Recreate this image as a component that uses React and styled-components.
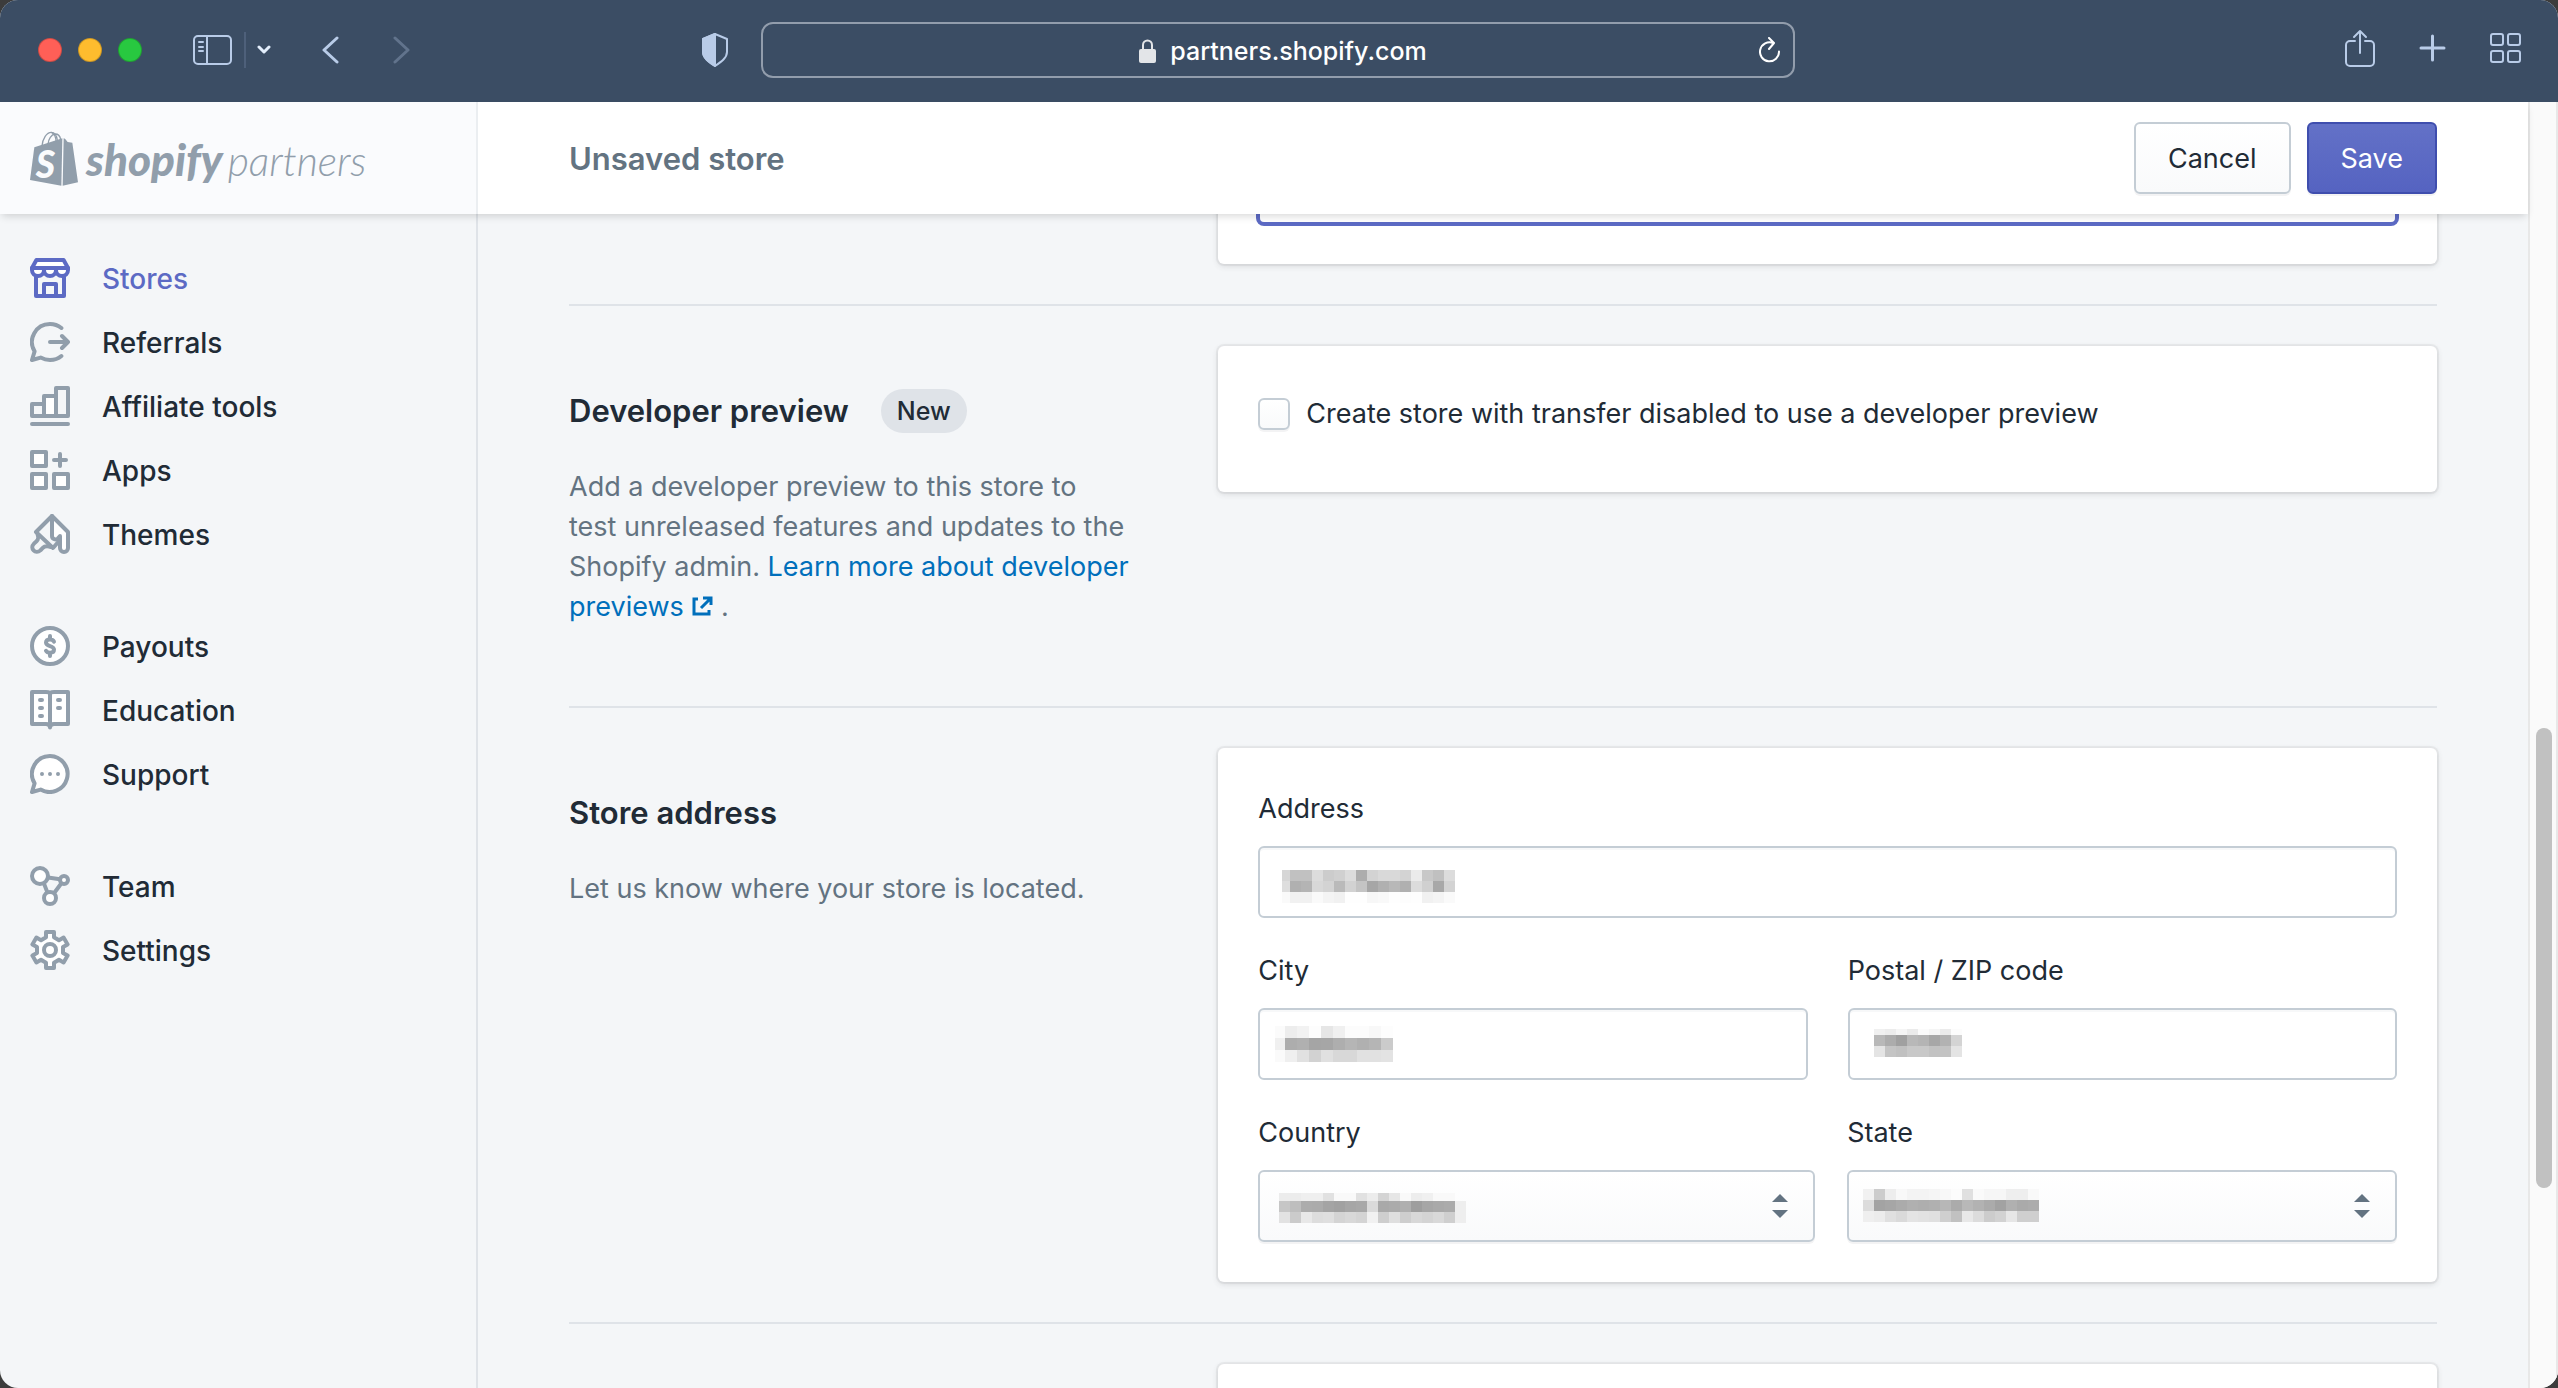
import { useState } from "react";
import styled, { createGlobalStyle } from "styled-components";

const GlobalStyle = createGlobalStyle`
  * {
    box-sizing: border-box;
  }
  body {
    margin: 0;
    background: #3c3c3c;
    color: #212b36;
    font-family: Inter, "Liberation Sans", sans-serif;
    font-size: 27px;
    line-height: 40px;
  }
  button, input, select {
    font: inherit;
    color: inherit;
  }
`;

const Window = styled.div`
  display: flex;
  flex-direction: column;
  height: 100vh;
  border-radius: 18px;
  overflow: hidden;
  background: #f4f6f8;
`;

/* browser toolbar */

const Toolbar = styled.header`
  display: grid;
  grid-template-columns: 761fr 1034fr 763fr;
  align-items: center;
  flex: none;
  height: 102px;
  padding-bottom: 2px;
  background: #3b4d64;
  color: #b9cce8;
`;

const ToolbarStart = styled.div`
  display: flex;
  align-items: center;
  padding: 0 32px 0 38px;
`;

const ToolbarEnd = styled.div`
  display: flex;
  align-items: center;
  justify-content: flex-end;
  gap: 44px;
  padding: 0 37px 4px 0;
`;

const Lights = styled.div`
  display: flex;
  gap: 16px;
  margin-right: 51px;
`;

const Light = styled.button`
  width: 24px;
  height: 24px;
  padding: 0;
  border: 1px solid rgba(0, 0, 0, 0.2);
  border-radius: 50%;
  background: ${(props) => props.$color};
`;

const ToolButton = styled.button`
  display: flex;
  padding: 0;
  border: none;
  background: none;
  color: inherit;
  opacity: ${(props) => (props.disabled ? 0.3 : 1)};
`;

const ToolDivider = styled.span`
  width: 2px;
  height: 36px;
  margin: 0 11px 0 12px;
  background: #4e607a;
`;

const History = styled.div`
  display: flex;
  gap: 54px;
  margin: 0 auto 0 51px;
`;

const AddressBar = styled.div`
  display: flex;
  align-items: center;
  height: 56px;
  padding: 0 12px 0 44px;
  border: 2px solid #929dac;
  border-radius: 12px;
  color: #fff;
  font-weight: 500;
  font-size: 25px;
`;

const Host = styled.div`
  flex: 1;
  display: flex;
  align-items: center;
  justify-content: center;
  gap: 14px;
  padding-top: 2px;
`;

/* page shell */

const Page = styled.div`
  flex: 1;
  display: flex;
  min-height: 0;
`;

const Frame = styled.div`
  flex: 1;
  display: flex;
  flex-direction: column;
  min-width: 0;
`;

const TopBar = styled.div`
  display: flex;
  flex: none;
  height: 112px;
  background: #fff;
  box-shadow: 0 4px 8px -2px rgba(0, 0, 0, 0.16);
  z-index: 1;
`;

const Brand = styled.a`
  display: flex;
  align-items: center;
  gap: 8px;
  width: 478px;
  padding-left: 30px;
  border-right: 2px solid #ebeef1;
  background: #fafbfd;
  color: #919eab;
  text-decoration: none;
  font-family: Lato, sans-serif;
  font-style: italic;
`;

const BrandText = styled.span`
  display: flex;
  align-items: baseline;
  gap: 5px;
  padding-top: 4px;
`;

const BrandName = styled.span`
  font-size: 44px;
  font-weight: 900;
`;

const BrandSuffix = styled.span`
  font-size: 41px;
  font-weight: 300;
`;

const SaveBar = styled.div`
  flex: 1;
  display: flex;
  align-items: center;
  gap: 16px;
  padding: 0 91px;
`;

const StatusText = styled.h1`
  flex: 1;
  margin: 0;
  padding-top: 2px;
  font-size: 31px;
  font-weight: 600;
  color: #637381;
`;

const Button = styled.button`
  height: 72px;
  padding: 2px 32px 0;
  border: 2px solid ${(props) => (props.$primary ? "#3f4eae" : "#c4cdd5")};
  border-radius: 6px;
  background: ${(props) =>
    props.$primary
      ? "linear-gradient(to bottom, #6371c7, #5563c1)"
      : "linear-gradient(to bottom, #fff, #f9fafb)"};
  box-shadow: 0 2px 0 rgba(22, 29, 37, 0.05);
  color: ${(props) => (props.$primary ? "#fff" : "#212b36")};
`;

const Body = styled.div`
  flex: 1;
  display: flex;
  min-height: 0;
`;

const Sidebar = styled.nav`
  flex: none;
  width: 478px;
  padding-top: 32px;
  border-right: 2px solid #dfe3e8;
`;

const NavGroup = styled.ul`
  margin: 0 0 48px;
  padding: 0;
  list-style: none;
`;

const NavLink = styled.a`
  display: flex;
  align-items: center;
  gap: 32px;
  height: 64px;
  padding-left: 30px;
  color: ${(props) => (props.$active ? "#5c6ac4" : "#212b36")};
  font-size: 28px;
  font-weight: 500;
  text-decoration: none;
  svg {
    color: ${(props) => (props.$active ? "#5c6ac4" : "#919eab")};
  }
`;

const NavLabel = styled.span`
  padding-top: 2px;
`;

const Main = styled.main`
  flex: 1;
  min-width: 0;
  padding: 0 91px;
  overflow: hidden;
`;

const Section = styled.section`
  display: grid;
  grid-template-columns: 1fr 2fr;
  gap: 40px;
  align-items: start;
  padding: 40px 0;
  border-top: 2px solid #dfe3e8;
`;

/* the part of the form that is scrolled under the top bar */
const ScrolledSection = styled(Section)`
  margin-top: -144px;
`;

const Annotation = styled.div`
  padding: 40px 40px 39px 0;
`;

const Heading = styled.h2`
  display: flex;
  align-items: center;
  gap: 32px;
  margin: 0 0 31px;
  font-size: 31px;
  line-height: 50px;
  font-weight: 600;
`;

const Badge = styled.span`
  padding: 0 16px;
  border-radius: 22px;
  background: #dfe3e8;
  font-size: 25px;
  font-weight: 500;
  line-height: 44px;
`;

const Description = styled.p`
  margin: 0;
  color: #637381;
`;

const Link = styled.a`
  color: #006fbb;
  text-decoration: none;
`;

const Card = styled.div`
  grid-column: 2;
  display: flex;
  flex-direction: column;
  gap: 32px;
  min-height: 106px;
  padding: 40px;
  border-radius: 6px;
  background: #fff;
  box-shadow: 0 0 0 2px rgba(63, 63, 68, 0.06), 0 2px 6px rgba(63, 63, 68, 0.16);
`;

const Choice = styled.label`
  display: flex;
  align-items: center;
  gap: 16px;
  padding: 8px 0 18px;
`;

const Checkbox = styled.input`
  appearance: none;
  width: 32px;
  height: 32px;
  margin: 0;
  border: 2px solid #c4cdd5;
  border-radius: 6px;
  background: linear-gradient(to bottom, #fff, #f9fafb);
  box-shadow: 0 2px 0 rgba(22, 29, 37, 0.05);
  &:checked {
    background: #5c6ac4;
  }
`;

const FieldRow = styled.div`
  display: grid;
  grid-template-columns: ${(props) => props.$columns || "1fr 1fr"};
  gap: ${(props) => props.$gap || "40px"};
`;

const FieldLabel = styled.label`
  display: block;
  margin-bottom: 16px;
  line-height: 42px;
`;

const Control = styled.div`
  position: relative;
  height: 72px;
`;

const Input = styled.input`
  display: block;
  width: 100%;
  height: 72px;
  padding: 0 24px;
  border: 2px solid #c4cdd5;
  border-radius: 6px;
  background: #fff;
  box-shadow: inset 0 2px 0 rgba(99, 115, 129, 0.05);
  outline: none;
`;

const FocusedInput = styled(Input)`
  border-color: #5c6ac4;
  box-shadow: 0 0 0 2px #5c6ac4;
`;

const Select = styled.select`
  appearance: none;
  width: 100%;
  height: 72px;
  padding: 0 60px 0 24px;
  border: 2px solid #c4cdd5;
  border-radius: 6px;
  background: linear-gradient(to bottom, #fff, #f9fafb);
  box-shadow: 0 2px 0 rgba(22, 29, 37, 0.05);
`;

const SelectArrows = styled.svg`
  position: absolute;
  top: 24px;
  right: 27px;
  color: #637381;
  pointer-events: none;
`;

const MosaicLayer = styled.svg`
  position: absolute;
  top: 0;
  left: 0;
  pointer-events: none;
`;

const Scrollbar = styled.div`
  display: grid;
  grid-template-rows: 626fr 460fr 200fr;
  flex: none;
  width: 30px;
  padding: 0 6px;
  border: solid #e8e8e8;
  border-width: 0 2px;
  background: #fafafa;
`;

const Thumb = styled.div`
  grid-row: 2;
  width: 16px;
  border-radius: 8px;
  background: #c1c1c1;
`;

/* icons */

const Icon = ({ children, size = 40 }) => (
  <svg
    width={size}
    height={size}
    viewBox="0 0 20 20"
    fill="none"
    stroke="currentColor"
    strokeWidth="2"
    strokeLinecap="round"
    strokeLinejoin="round"
    aria-hidden="true"
  >
    {children}
  </svg>
);

const icons = {
  stores: (
    <>
      <path d="M3.2 1h13.6L19 5H1z" fill="#fff" />
      <path d="M1 5v1a3 3 0 0 0 6 0a3 3 0 0 0 6 0a3 3 0 0 0 6 0V5z" fill="#fff" />
      <path d="M3 9v10h14V9M7 19v-6h6v6" />
    </>
  ),
  referrals: (
    <path d="M15.7 3C13.8 1.5 11.9 1 10 1a9 9 0 0 0-7.7 13.7L1 19l4.3-1.2C6.8 18.6 8.4 19 10 19c2.1 0 4.1-.6 5.700-2M10 10h9M16 7l3 3-3 3" />
  ),
  affiliate: (
    <>
      <path d="M7 5h6v10H7z" fill="#fff" />
      <path d="M1 9h6v6H1zM13 1h6v14h-6zM1 19h18" />
    </>
  ),
  apps: (
    <>
      <path d="M1 1h7v7H1zM1 12h7v7H1zM12 12h7v7h-7z" fill="#fff" />
      <path d="M12 5h6M15 2v6" />
    </>
  ),
  themes: (
    <>
      <path d="M11 1l8 8v8a2 2 0 0 1-4 0v-6l-1 1.2c-1 1-3 .5-3-1.2z" fill="#fff" />
      <path d="M11 1L3 9l8.5 8 3.5-4" />
      <path d="M3.8 10.2c1 2.3-.3 3.3-1.8 4.6-2.4 2.4.8 5.6 3.2 3.4 1.3-1.5 2.3-2.8 5.3-1.7" />
    </>
  ),
  payouts: (
    <>
      <circle cx="10" cy="10" r="9" fill="#fff" />
      <path d="M12 7.8c-.4-.8-1.2-1.1-2-1.1-1.2 0-2 .6-2 1.6 0 2.3 4 1.2 4 3.5 0 1-.8 1.6-2 1.6-.9 0-1.6-.3-2-1M10 5v1.5M10 13.5V15" />
    </>
  ),
  education: (
    <>
      <path d="M1 1h7c1 0 2 .4 2 1 0-.6 1-1 2-1h7v16h-7c-1 0-2 .4-2 1.8 0-1.4-1-1.8-2-1.8H1z" fill="#fff" />
      <path d="M10 2v16M5 5h1M5 9h1M5 13h1M14 5h1M14 9h1" />
    </>
  ),
  support: (
    <>
      <path d="M10 1a9 9 0 0 0-7.7 13.7L1 19l4.3-1.2A9 9 0 1 0 10 1z" fill="#fff" />
      <path d="M6 10h0M10 10h0M14 10h0" />
    </>
  ),
  team: (
    <>
      <path d="M9 5.8l6 .8M7 8.8l1.700 4.400M15.700 8.600L12 13.600" />
      <circle cx="5" cy="5" r="4" fill="#fff" />
      <circle cx="17" cy="7" r="2" fill="#fff" />
      <circle cx="10" cy="16" r="3" fill="#fff" />
    </>
  ),
  settings: (
    <>
      <path
        d="M8 3.6V1h4v2.6l2.5 1.5 2.3-1.3 2 3.4-2.3 1.3v3l2.3 1.3-2 3.4-2.3-1.3-2.5 1.5V19H8v-2.6l-2.5-1.5-2.3 1.3-2-3.4 2.3-1.3v-3L1.2 7.2l2-3.4 2.3 1.3z"
        fill="#fff"
      />
      <circle cx="10" cy="10" r="3" />
    </>
  ),
};

const ToolIcon = ({ width, height, stroke = 3, children }) => (
  <svg
    width={width}
    height={height}
    viewBox={`0 0 ${width} ${height}`}
    fill="none"
    stroke="currentColor"
    strokeWidth={stroke}
    strokeLinecap="round"
    strokeLinejoin="round"
    aria-hidden="true"
  >
    {children}
  </svg>
);

const ShopifyBag = () => (
  <svg width="48" height="55" viewBox="0 0 144 165" fill="currentColor" aria-hidden="true">
    <path d="M13 49L97 22L94 164L0 147z" />
    <path d="M101 22l4 1 8 10 14 2 17 119-46 10z" />
    <g fill="none" stroke="currentColor" strokeWidth="4">
      <path d="M36 45C38 22 50 4 64 4c10 0 16 8 18 24" />
      <path d="M54 40C55 24 64 10 76 9c8 0 14 6 16 16" />
      <path d="M64 4c10 4 14 14 14 28" />
    </g>
    <text x="17" y="140" fontSize="112" fontWeight="900" fill="#fafbfd">S</text>
  </svg>
);

const navGroups = [
  [
    { icon: "stores", label: "Stores", active: true },
    { icon: "referrals", label: "Referrals" },
    { icon: "affiliate", label: "Affiliate tools" },
    { icon: "apps", label: "Apps" },
    { icon: "themes", label: "Themes" },
  ],
  [
    { icon: "payouts", label: "Payouts" },
    { icon: "education", label: "Education" },
    { icon: "support", label: "Support" },
  ],
  [
    { icon: "team", label: "Team" },
    { icon: "settings", label: "Settings" },
  ],
];

/* redacted values: grey level of every block, row by row */
const mosaics = {
  address: {
    x: 21, y: 24, size: 11, first: 11, trim: 3,
    rows: [
      "d6 c1 c1 dc cc d0 dc ad d3 d9 d9 d3 eb c8 c0 dc",
      "de b0 b4 d8 d3 ba d2 c4 a6 b0 b8 b0 dc d0 a8 d3",
      "fa f1 f1 fa f4 f1 fe fe f7 f9 fe fd fe f1 f4 fa",
    ],
  },
  city: {
    x: 15, y: 18, size: 12, first: 12, trim: 2,
    rows: [
      "fb ed f2 fd e6 f0 fc fc f8 fd",
      "f0 ad b0 a5 a6 ae b5 b0 b5 cb",
      "fa ef e1 d2 e0 d8 d8 e1 e1 e3",
    ],
  },
  zip: {
    x: 26, y: 21, size: 11, first: 6,
    rows: [
      "f0 ec f5 eb fb f5 eb fc",
      "b8 ac a0 b8 b4 a7 b2 d4",
      "e4 c4 c0 c8 c8 c2 c3 e4",
    ],
  },
  country: {
    x: 21, y: 23, size: 11, first: 8,
    rows: [
      "ec ec ef ef e1 f9 f9 e1 ec d4 e6 f9 ed f0 f9 f9",
      "c6 be ac ab a4 a1 a6 a8 da a9 ab af 9e a6 a9 ab ee",
      "e2 cb e8 dd df d4 d8 d4 f1 ce df ce d8 d4 d9 cf ee",
    ],
  },
  state: {
    x: 16, y: 19, size: 11, first: 11,
    rows: [
      "f1 cc ed f8 f3 f3 f5 f8 fc e0 fa f6 f6 ee ee f9",
      "dc a3 a6 ab b0 ae b0 b7 ab b8 b2 ab a2 b0 aa ac",
      "ef ec e0 da e4 e2 e0 cf c1 e8 dc cc d2 e6 cf cf",
    ],
  },
};

const Mosaic = ({ name }) => {
  const { x, y, size, first, trim = 0, rows } = mosaics[name];
  return (
    <MosaicLayer width="240" height="72" shapeRendering="crispEdges" aria-hidden="true">
      {rows.map((row, r) =>
        row.split(" ").map((level, c) => (
          <rect
            key={`${r}-${c}`}
            x={c === 0 ? x + trim : x + c * size}
            y={r === 0 ? y : y + first + (r - 1) * size}
            width={c === 0 ? size - trim : size}
            height={r === 0 ? first : size}
            fill={`#${level}${level}${level}`}
          />
        ))
      )}
    </MosaicLayer>
  );
};

const TextField = ({ id, label }) => (
  <div>
    <FieldLabel htmlFor={id}>{label}</FieldLabel>
    <Control>
      <Input id={id} type="text" />
      <Mosaic name={id} />
    </Control>
  </div>
);

const SelectField = ({ id, label }) => (
  <div>
    <FieldLabel htmlFor={id}>{label}</FieldLabel>
    <Control>
      <Select id={id}>
        <option value=""></option>
      </Select>
      <Mosaic name={id} />
      <SelectArrows width="16" height="24" fill="currentColor" aria-hidden="true">
        <path d="M8 0l8 8H0zM8 24l8-8H0z" />
      </SelectArrows>
    </Control>
  </div>
);

const BrowserToolbar = () => (
  <Toolbar>
    <ToolbarStart>
      <Lights>
        <Light $color="#ff5f57" aria-label="Close" />
        <Light $color="#febc2e" aria-label="Minimize" />
        <Light $color="#28c840" aria-label="Zoom" />
      </Lights>
      <ToolButton aria-label="Sidebar">
        <ToolIcon width={39} height={30} stroke={2}>
          <rect x="1" y="1" width="37" height="28" rx="4" />
          <path d="M14 1v28M6 7h4M6 12h4M6 16h4" />
        </ToolIcon>
      </ToolButton>
      <ToolDivider />
      <ToolButton aria-label="Tab groups">
        <ToolIcon width={14} height={10}>
          <path d="M2 2l5 5 5-5" stroke="#e3eefc" />
        </ToolIcon>
      </ToolButton>
      <History>
        <ToolButton aria-label="Back">
          <ToolIcon width={17} height={28}>
            <path d="M15 2L2 14l13 12" />
          </ToolIcon>
        </ToolButton>
        <ToolButton aria-label="Forward" disabled>
          <ToolIcon width={17} height={28}>
            <path d="M2 2l13 12L2 26" />
          </ToolIcon>
        </ToolButton>
      </History>
      <ToolButton aria-label="Privacy report">
        <ToolIcon width={28} height={34} stroke={2}>
          <path d="M14 1l12 5v13c0 6-6 10-12 14C8 29 2 25 2 19V6z" />
          <path d="M14 1v32C8 29 2 25 2 19V6z" fill="currentColor" />
        </ToolIcon>
      </ToolButton>
    </ToolbarStart>
    <AddressBar>
      <Host>
        <svg width="17" height="24" viewBox="0 0 17 24" fill="#e3e5e8" aria-hidden="true">
          <rect x="0" y="10" width="17" height="14" rx="2" />
          <path d="M4 11V6a4.500 4.500 0 0 1 9 0v5" fill="none" stroke="#e3e5e8" strokeWidth="2" />
        </svg>
        partners.shopify.com
      </Host>
      <ToolButton aria-label="Reload">
        <ToolIcon width={22} height={26} stroke={2}>
          <path d="M20 14.500A9.500 9.500 0 1 1 14 6M10 1l5 5-5 6" />
        </ToolIcon>
      </ToolButton>
    </AddressBar>
    <ToolbarEnd>
      <ToolButton aria-label="Share">
        <ToolIcon width={30} height={38} stroke={2}>
          <path d="M10 12H5a4 4 0 0 0-4 4v17a4 4 0 0 0 4 4h20a4 4 0 0 0 4-4V16a4 4 0 0 0-4-4h-5M15 24V2M9 8l6-6 6 6" />
        </ToolIcon>
      </ToolButton>
      <ToolButton aria-label="New tab">
        <ToolIcon width={27} height={28}>
          <path d="M13.500 2v24M2 14h23" />
        </ToolIcon>
      </ToolButton>
      <ToolButton aria-label="Tab overview">
        <ToolIcon width={31} height={30} stroke={2}>
          <rect x="1" y="1" width="12" height="11" rx="2" />
          <rect x="18" y="1" width="12" height="11" rx="2" />
          <rect x="1" y="18" width="12" height="11" rx="2" />
          <rect x="18" y="18" width="12" height="11" rx="2" />
        </ToolIcon>
      </ToolButton>
    </ToolbarEnd>
  </Toolbar>
);

const App = () => {
  const [preview, setPreview] = useState(false);

  return (
    <>
      <GlobalStyle />
      <Window>
        <BrowserToolbar />
        <Page>
          <Frame>
            <TopBar>
              <Brand href="#">
                <ShopifyBag />
                <BrandText>
                  <BrandName>shopify</BrandName>
                  <BrandSuffix>partners</BrandSuffix>
                </BrandText>
              </Brand>
              <SaveBar>
                <StatusText>Unsaved store</StatusText>
                <Button type="button">Cancel</Button>
                <Button type="submit" $primary>Save</Button>
              </SaveBar>
            </TopBar>
            <Body>
              <Sidebar>
                {navGroups.map((group) => (
                  <NavGroup key={group[0].label}>
                    {group.map((item) => (
                      <li key={item.label}>
                        <NavLink href="#" $active={item.active}>
                          <Icon>{icons[item.icon]}</Icon>
                          <NavLabel>{item.label}</NavLabel>
                        </NavLink>
                      </li>
                    ))}
                  </NavGroup>
                ))}
              </Sidebar>
              <Main>
                <ScrolledSection>
                  <Card>
                    <FocusedInput type="text" aria-label="Store details" />
                  </Card>
                </ScrolledSection>
                <Section>
                  <Annotation>
                    <Heading>
                      Developer preview
                      <Badge>New</Badge>
                    </Heading>
                    <Description>
                      Add a developer preview to this store to test&nbsp;unreleased features and
                      updates to the Shopify admin.{" "}
                      <Link href="#">
                        Learn more about developer previews{" "}
                        <svg
                          width="22"
                          height="20"
                          viewBox="0 0 22 20"
                          fill="none"
                          stroke="currentColor"
                          strokeWidth="3"
                          aria-hidden="true"
                        >
                          <path d="M7 3H3v15h15v-4M12 2h8v7M20 2L10 12" />
                        </svg>
                      </Link>{" "}
                      .
                    </Description>
                  </Annotation>
                  <Card>
                    <Choice>
                      <Checkbox
                        type="checkbox"
                        checked={preview}
                        onChange={(e) => setPreview(e.target.checked)}
                      />
                      Create store with transfer disabled to use a developer preview
                    </Choice>
                  </Card>
                </Section>
                <Section>
                  <Annotation>
                    <Heading>Store address</Heading>
                    <Description>Let us know where your store is located.</Description>
                  </Annotation>
                  <Card>
                    <TextField id="address" label="Address" />
                    <FieldRow>
                      <TextField id="city" label="City" />
                      <TextField id="zip" label="Postal / ZIP code" />
                    </FieldRow>
                    <FieldRow $columns="557fr 550fr" $gap="32px">
                      <SelectField id="country" label="Country" />
                      <SelectField id="state" label="State" />
                    </FieldRow>
                  </Card>
                </Section>
                <Section>
                  <Card />
                </Section>
              </Main>
            </Body>
          </Frame>
          <Scrollbar>
            <Thumb />
          </Scrollbar>
        </Page>
      </Window>
    </>
  );
};

export default App;
